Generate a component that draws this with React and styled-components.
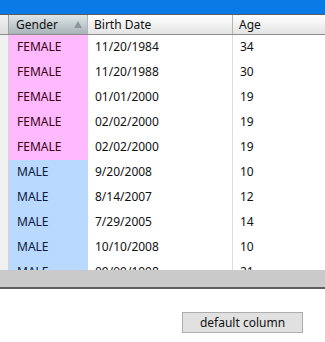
import React from 'react';
import styled, { createGlobalStyle } from 'styled-components';

const rows = [
  { gender: 'FEMALE', date: '11/20/1984', age: 34 },
  { gender: 'FEMALE', date: '11/20/1988', age: 30 },
  { gender: 'FEMALE', date: '01/01/2000', age: 19 },
  { gender: 'FEMALE', date: '02/02/2000', age: 19 },
  { gender: 'FEMALE', date: '02/02/2000', age: 19 },
  { gender: 'MALE', date: '9/20/2008', age: 10 },
  { gender: 'MALE', date: '8/14/2007', age: 12 },
  { gender: 'MALE', date: '7/29/2005', age: 14 },
  { gender: 'MALE', date: '10/10/2008', age: 10 },
  { gender: 'MALE', date: '09/09/1998', age: 21 },
];

const COLS = '9px 79px 145px 1fr';

const App = () => {
  return (
    <>
      <GlobalStyle />
      <Window>
        <TitleBar />
        <Header>
          <Gutter />
          <HeadCell $sorted>
            Gender
            <SortArrow />
          </HeadCell>
          <HeadCell>Birth Date</HeadCell>
          <HeadCell $last>Age</HeadCell>
        </Header>
        <Body>
          {rows.map((row, index) => (
            <Row key={index}>
              <RowGutter />
              <GenderCell $female={row.gender === 'FEMALE'}>{row.gender}</GenderCell>
              <Cell $line>{row.date}</Cell>
              <Cell>{row.age}</Cell>
            </Row>
          ))}
        </Body>
        <ScrollBar />
        <Footer>
          <Button>default column</Button>
        </Footer>
      </Window>
    </>
  );
};

export default App;

const GlobalStyle = createGlobalStyle`
  body {
    margin: 0;
    background: #fff;
    font-family: "Noto Sans", "Open Sans", sans-serif;
    font-size: 12px;
  }
`;

const Window = styled.div`
  width: 325px;
  height: 342px;
  display: flex;
  flex-direction: column;
  overflow: hidden;
`;

const TitleBar = styled.div`
  height: 14px;
  background: #0a7ae6;
  border-bottom: 1px solid #5a5a5a;
`;

const Header = styled.div`
  display: grid;
  grid-template-columns: ${COLS};
  height: 19px;
  border-bottom: 1px solid #8c8c8c;
  background: linear-gradient(#ffffff, #e4e4e4);
`;

const Gutter = styled.div`
  border-right: 1px solid #a0a0a0;
  background: linear-gradient(#f4f4f4, #dcdcdc);
`;

const HeadCell = styled.div`
  position: relative;
  display: flex;
  align-items: center;
  padding-left: ${(p) => (p.$sorted ? '7px' : '6px')};
  color: #111;
  border-right: ${(p) => (p.$last ? 'none' : '1px solid #b4b4b4')};
  background: ${(p) =>
    p.$sorted ? 'linear-gradient(#dfe6ea, #a8b3b7)' : 'transparent'};
`;

const SortArrow = styled.span`
  position: absolute;
  right: 5px;
  top: 6px;
  width: 0;
  height: 0;
  border-left: 4px solid transparent;
  border-right: 4px solid transparent;
  border-bottom: 7px solid #8e9598;
`;

const Body = styled.div`
  height: 235px;
  overflow: hidden;
  background: #fff;
`;

const Row = styled.div`
  display: grid;
  grid-template-columns: ${COLS};
  height: 25px;
`;

const RowGutter = styled.div`
  background: #f0f0f0;
  border-right: 1px solid #d4d4d4;
`;

const Cell = styled.div`
  padding: 3px 0 0 7px;
  color: #111;
  border-right: ${(p) => (p.$line ? '1px solid #dcdcdc' : 'none')};
`;

const GenderCell = styled(Cell)`
  background: ${(p) => (p.$female ? '#ffbaff' : '#b9d9ff')};
  color: ${(p) => (p.$female ? '#3a0010' : '#0c1a3a')};
  padding-left: 8px;
`;

const ScrollBar = styled.div`
  height: 17px;
  background: #cacaca;
  border-bottom: 2px solid #5e5e5e;
`;

const Footer = styled.div`
  display: flex;
  justify-content: flex-end;
  padding: 23px 22px 0 0;
`;

const Button = styled.button`
  width: 121px;
  height: 21px;
  padding: 0;
  font-family: "Noto Sans", "Open Sans", sans-serif;
  font-size: 12px;
  color: #111;
  background: #e1e1e1;
  border: 1px solid #adadad;
`;
